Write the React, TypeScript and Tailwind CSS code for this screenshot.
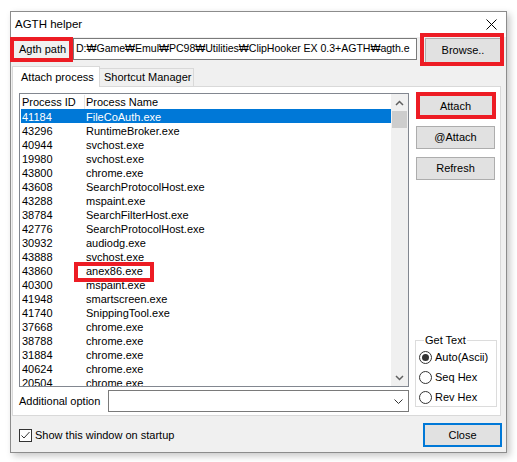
import React from "react";

const rows: [string, string][] = [
  ["41184", "FileCoAuth.exe"],
  ["43296", "RuntimeBroker.exe"],
  ["40944", "svchost.exe"],
  ["19980", "svchost.exe"],
  ["43800", "chrome.exe"],
  ["43608", "SearchProtocolHost.exe"],
  ["43288", "mspaint.exe"],
  ["38784", "SearchFilterHost.exe"],
  ["42776", "SearchProtocolHost.exe"],
  ["30932", "audiodg.exe"],
  ["43888", "svchost.exe"],
  ["43860", "anex86.exe"],
  ["40300", "mspaint.exe"],
  ["41948", "smartscreen.exe"],
  ["41740", "SnippingTool.exe"],
  ["37668", "chrome.exe"],
  ["38788", "chrome.exe"],
  ["31884", "chrome.exe"],
  ["40624", "chrome.exe"],
  ["20504", "chrome.exe"],
];

function Btn({ label, className = "" }: { label: string; className?: string }) {
  return (
    <div
      className={
        "flex items-center justify-center bg-[#e1e1e1] border border-[#adadad] text-[11px] text-black " +
        className
      }
    >
      {label}
    </div>
  );
}

function Radio({ label, checked }: { label: string; checked?: boolean }) {
  return (
    <div className="flex items-center h-[20px]">
      <div className="w-[13px] h-[13px] rounded-full border border-[#333333] bg-white flex items-center justify-center">
        {checked && <div className="w-[7px] h-[7px] rounded-full bg-[#333333]" />}
      </div>
      <span className="ml-[3px] text-[11px]">{label}</span>
    </div>
  );
}

export default function App() {
  return (
    <div className="w-[517px] h-[462px] bg-white relative overflow-hidden font-['Liberation_Sans',Arial,sans-serif] text-black">
      <div className="pl-[10px] pt-[11px]">
        <div className="w-[497px] h-[442px] border border-[#8c8c8c] bg-[#f0f0f0] flex flex-col shadow-[3px_3px_7px_rgba(0,0,0,0.22)]">
          {/* Title bar */}
          <div className="h-[25px] bg-white flex items-center justify-between pl-[4px] pr-[9px]">
            <span className="text-[11.5px] leading-none pt-[1px]">AGTH helper</span>
            <svg width="11" height="11" viewBox="0 0 11 11">
              <path d="M0.5 0.5 L10.5 10.5 M10.5 0.5 L0.5 10.5" stroke="#000" strokeWidth="1" />
            </svg>
          </div>

          {/* Path row */}
          <div className="h-[29px] flex items-start pl-[8px] pt-[1px]">
            <div className="w-[54px] h-[22px] flex items-center text-[11px]">Agth path</div>
            <div className="w-[344px] h-[22px] bg-white border border-[#7a7a7a] flex items-center pl-[2px] overflow-hidden whitespace-nowrap text-[10.6px] tracking-[-0.05px]">
              D:₩Game₩Emul₩PC98₩Utilities₩ClipHooker EX 0.3+AGTH₩agth.e
            </div>
            <Btn label="Browse.." className="ml-[8px] w-[76px] h-[25px]" />
          </div>

          {/* Tabs */}
          <div className="h-[20px] flex items-end pl-[1px]">
            <div className="relative z-10 w-[88px] h-[21px] -mb-[1px] bg-white border border-b-0 border-[#d9d9d9] flex items-center pl-[8px] text-[11px]">
              Attach process
            </div>
            <div className="w-[94px] h-[18px] bg-[#f0f0f0] border border-l-0 border-b-0 border-[#d9d9d9] flex items-center pl-[4px] text-[11px]">
              Shortcut Manager
            </div>
          </div>

          {/* Panel */}
          <div className="ml-[1px] w-[489px] h-[330px] bg-white border border-[#d9d9d9] flex pl-[6px] pt-[6px] pb-[3px]">
            {/* Left column */}
            <div className="w-[390px] flex flex-col">
              <div className="h-[294px] border border-[#828790] bg-white flex overflow-hidden">
                <div className="w-[371px] flex flex-col">
                  <div className="h-[15px] flex items-center text-[11px] shrink-0 pt-[1px]">
                    <div className="w-[64px] pl-[2px] h-full flex items-center">Process ID</div>
                    <div className="w-px h-full bg-[#e5e5e5]" />
                    <div className="pl-[1px]">Process Name</div>
                  </div>
                  {rows.map(([id, name], i) => (
                    <div
                      key={i}
                      className={
                        "h-[14px] shrink-0 ml-[1px] w-[370px] flex items-center pt-[2px] text-[11px] " +
                        (i === 0 ? "bg-[#0078d7] text-white" : "")
                      }
                    >
                      <div className="w-[65px] pl-[1px]">{id}</div>
                      <div>{name}</div>
                    </div>
                  ))}
                </div>
                {/* Scrollbar */}
                <div className="w-[17px] bg-[#f0f0f0] flex flex-col items-center">
                  <div className="h-[17px] w-full flex items-center justify-center">
                    <svg width="9" height="6" viewBox="0 0 9 6">
                      <path d="M1 5 L4.5 1.5 L8 5" stroke="#606060" strokeWidth="1.5" fill="none" />
                    </svg>
                  </div>
                  <div className="w-[15px] h-[17px] bg-[#cdcdcd]" />
                  <div className="flex-1" />
                  <div className="h-[17px] w-full flex items-center justify-center">
                    <svg width="9" height="6" viewBox="0 0 9 6">
                      <path d="M1 1 L4.5 4.5 L8 1" stroke="#606060" strokeWidth="1.5" fill="none" />
                    </svg>
                  </div>
                </div>
              </div>
              <div className="mt-[3px] h-[22px] flex items-center">
                <div className="w-[89px] text-[11px]">Additional option</div>
                <div className="flex-1 h-[22px] border border-[#7a7a7a] bg-white flex items-center justify-end pr-[5px]">
                  <svg width="9" height="5" viewBox="0 0 9 5">
                    <path d="M0.5 0.5 L4.5 4.5 L8.5 0.5" stroke="#333" strokeWidth="1" fill="none" />
                  </svg>
                </div>
              </div>
            </div>

            {/* Right column */}
            <div className="ml-[6px] w-[82px] flex flex-col pt-[2px] pb-[5px]">
              <Btn label="Attach" className="ml-[1px] w-[79px] h-[23px]" />
              <Btn label="@Attach" className="ml-[1px] mt-[8px] w-[79px] h-[23px]" />
              <Btn label="Refresh" className="ml-[1px] mt-[8px] w-[79px] h-[23px]" />
              <div className="flex-1" />
              <div className="relative h-[67px] border border-[#dcdcdc] pt-[6px] pl-[3px]">
                <span className="absolute -top-[8px] left-[8px] px-[1px] bg-white text-[11px] leading-[14px]">Get Text</span>
                <Radio label="Auto(Ascii)" checked />
                <Radio label="Seq Hex" />
                <Radio label="Rev Hex" />
              </div>
            </div>
          </div>

          {/* Bottom */}
          <div className="flex-1 flex items-start justify-between pl-[8px] pr-[4px] pt-[7px]">
            <div className="flex items-center mt-[4px]">
              <div className="w-[13px] h-[13px] border border-[#333333] bg-white flex items-center justify-center">
                <svg width="11" height="11" viewBox="0 0 11 11">
                  <path d="M1.5 5.5 L4 8 L9.5 2" stroke="#333" strokeWidth="1" fill="none" />
                </svg>
              </div>
              <span className="ml-[3px] text-[11px]">Show this window on startup</span>
            </div>
            <div className="w-[79px] h-[24px] bg-[#e1e1e1] border-2 border-[#0078d7] flex items-center justify-center text-[11px]">
              Close
            </div>
          </div>
        </div>
      </div>

      {/* Red annotation boxes */}
      <div className="absolute left-[10px] top-[37px] w-[63px] h-[25px] border-4 border-[#ed1c24]" />
      <div className="absolute left-[420px] top-[33px] w-[84px] h-[33px] border-4 border-[#ed1c24]" />
      <div className="absolute left-[416px] top-[92px] w-[80px] h-[27px] border-4 border-[#ed1c24]" />
      <div className="absolute left-[74px] top-[262px] w-[80px] h-[20px] border-4 border-[#ed1c24]" />
    </div>
  );
}
